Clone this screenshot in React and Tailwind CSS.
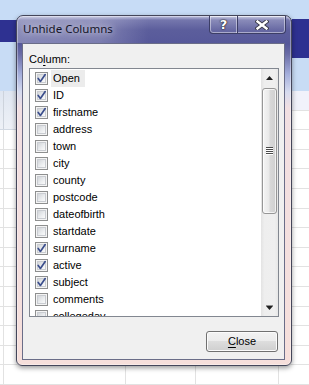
import React from "react";

const items = [
  ["Open", true],
  ["ID", true],
  ["firstname", true],
  ["address", false],
  ["town", false],
  ["city", false],
  ["county", false],
  ["postcode", false],
  ["dateofbirth", false],
  ["startdate", false],
  ["surname", true],
  ["active", true],
  ["subject", true],
  ["comments", false],
  ["collegeday", false],
];

function GridRows({ count, cells }) {
  return (
    <>
      {Array.from({ length: count }).map((_, i) => (
        <div key={i} className="h-[20px] flex border-b border-[#e2e2e2] bg-white">
          {cells}
        </div>
      ))}
    </>
  );
}

function CheckBox({ checked }) {
  return (
    <span className="relative w-[13px] h-[13px] shrink-0 border border-[#8e8f8f] bg-[#f4f4f4] p-[1px]">
      <span className="block w-full h-full border border-[#c9ccd1] bg-[linear-gradient(135deg,#d2d5d9,#eceef0_60%,#fafafa)]" />
      {checked && (
        <svg className="absolute left-[-1px] top-[-1px]" width="13" height="13" viewBox="0 0 13 13">
          <path d="M3.2 6.4 L5.4 9.4 L10.2 2.6" fill="none" stroke="#3b4e8c" strokeWidth="1.7" strokeLinecap="round" strokeLinejoin="round" />
        </svg>
      )}
    </span>
  );
}

export default function App() {
  return (
    <div className="relative w-[309px] h-[385px] overflow-hidden bg-white font-['Liberation_Sans',Arial,sans-serif]">
      {/* background sheet */}
      <div className="flex w-full h-full">
        <div className="w-[16px] flex flex-col">
          <div className="h-[20px] bg-[#c7dcf6]" />
          <div className="h-[23px] bg-[#2e3191]" />
          <div className="h-[50px] bg-[#c8dcf5]" />
          <div className="h-[40px] flex border-b border-[#d2d9e3] bg-[linear-gradient(to_bottom,#dfe6f1,#eef1f7)]">
            <div className="w-[4px] border-r border-[#cdd3dc]" />
          </div>
          <GridRows count={13} cells={<div className="w-[4px] border-r border-[#e2e2e2]" />} />
        </div>
        <div className="flex-1 flex flex-col">
          <div className="h-[20px] bg-[#c7dcf6]" />
          <div className="h-[30px] bg-[#2e3191]" />
          <div className="h-[43px] bg-[#c8dcf5]" />
          <div className="h-[40px] bg-[#eef1f7] border-b border-[#d2d9e3]" />
          <GridRows
            count={13}
            cells={
              <>
                <div className="w-[110px] border-r border-[#e2e2e2]" />
                <div className="w-[70px] border-r border-[#e2e2e2]" />
                <div className="w-[83px] border-r border-[#e2e2e2]" />
              </>
            }
          />
        </div>
        <div className="w-[17px] flex flex-col">
          <div className="h-[19px] bg-[#c7dcf6]" />
          <div className="h-[40px] bg-[#2e3191]" />
          <div className="h-[34px] bg-[#c8dcf5]" />
          <div className="h-[20px] bg-[#f1f2fb] border-b border-[#e2e2e2]" />
          <GridRows count={14} cells={null} />
        </div>
      </div>

      {/* dialog window */}
      <div className="absolute left-[16px] top-[15px] w-[276px] h-[351px] flex flex-col rounded-t-[7px] rounded-b-[6px] border border-[#44465a] bg-[linear-gradient(to_bottom,#c2c5e0_0px,#7577ad_4px,#5c5e9c_14px,#56589a_28px,#6a6ca6_38px,#a4aedb_58px,#d6dbef_76px,#f1dfe2_92px,#f6dfdb_100%)] shadow-[0_2px_5px_rgba(0,0,0,0.4),inset_0_0_0_1px_rgba(255,255,255,0.35)]">
        <div className="h-[27px] flex items-start pl-[6px] pr-[5px] rounded-t-[6px] bg-[linear-gradient(to_right,rgba(255,255,255,0.28),rgba(255,255,255,0.22)_30%,rgba(255,255,255,0)_48%)]">
          <span className="mt-[5px] text-[11.5px] leading-[16px] text-[#15152a] font-['Noto_Sans','Liberation_Sans',sans-serif] [text-shadow:0_0_6px_rgba(255,255,255,0.8),0_0_12px_rgba(255,255,255,0.5)]">
            Unhide Columns
          </span>
          <div className="ml-auto flex h-[18px] rounded-b-[4px] border border-t-0 border-[#3c3e66] shadow-[inset_0_0_0_1px_rgba(255,255,255,0.45)] overflow-hidden">
            <div className="w-[28px] h-full flex items-center justify-center border-r border-[#3c3e66] shadow-[inset_-1px_0_0_rgba(255,255,255,0.45)] bg-[linear-gradient(to_bottom,rgba(255,255,255,0.18),rgba(255,255,255,0.05))]">
              <span className="text-[13px] leading-none font-bold text-white font-['DejaVu_Sans','Liberation_Sans',sans-serif] [text-shadow:0_0_1px_#222,0_0_1px_#222,0_0_2px_#333]">
                ?
              </span>
            </div>
            <div className="w-[47px] h-full flex items-center justify-center bg-[linear-gradient(to_bottom,rgba(255,255,255,0.18),rgba(255,255,255,0.05))]">
              <svg width="14" height="10" viewBox="0 0 14 10">
                <path d="M2.5 1.5 L11.5 8.5 M11.5 1.5 L2.5 8.5" stroke="#3a3a48" strokeWidth="4.2" strokeLinecap="square" />
                <path d="M2.5 1.5 L11.5 8.5 M11.5 1.5 L2.5 8.5" stroke="#ffffff" strokeWidth="2.4" strokeLinecap="square" />
              </svg>
            </div>
          </div>
        </div>

        {/* client area */}
        <div className="ml-[5px] mr-[6px] h-[317px] flex flex-col border border-[#6a6d88] bg-[#f0f0f0] text-[11px] text-black">
          <div className="ml-[6px] mt-[7px] h-[16px] leading-[16px]">
            Co<span className="underline underline-offset-2">l</span>umn:
          </div>
          <div className="ml-[6px] mt-[1px] w-[250px] h-[249px] flex border border-[#828790] bg-white">
            <div className="flex-1 overflow-hidden pt-[1px]">
              {items.map(([name, checked], i) => (
                <div key={name} className="h-[17px] flex items-center pl-[5px]">
                  <CheckBox checked={checked} />
                  <span
                    className={
                      i === 0
                        ? "ml-[3px] pl-[2px] pr-[5px] h-[17px] leading-[17px] bg-[#ececec]"
                        : "ml-[3px] pl-[2px] h-[17px] leading-[17px]"
                    }
                  >
                    {name}
                  </span>
                </div>
              ))}
            </div>
            <div className="w-[17px] h-full flex flex-col bg-[linear-gradient(to_right,#e3e3e3,#eeeeee_20%,#efefef_80%,#e7e7e7)]">
              <div className="h-[18px] flex items-center justify-center">
                <svg width="7" height="4" viewBox="0 0 7 4">
                  <path d="M0 4 L3.5 0 L7 4 Z" fill="#202020" />
                </svg>
              </div>
              <div className="mx-[1px] mt-[1px] h-[126px] flex items-center justify-center rounded-[3px] border border-[#969696] bg-[linear-gradient(to_right,#f4f4f4,#e9e9e9_45%,#d8d8d8_55%,#d0d0d0)] shadow-[inset_0_0_0_1px_rgba(255,255,255,0.7)]">
                <svg width="7" height="8" viewBox="0 0 7 8">
                  <path d="M0 0.5 H7 M0 2.5 H7 M0 4.5 H7 M0 6.5 H7" stroke="#4a4a4a" strokeWidth="1" />
                  <path d="M0 1.5 H7 M0 3.5 H7 M0 5.5 H7 M0 7.5 H7" stroke="#ffffff" strokeWidth="1" />
                </svg>
              </div>
              <div className="flex-1" />
              <div className="h-[18px] flex items-center justify-center">
                <svg width="7" height="5" viewBox="0 0 7 5">
                  <path d="M0 0.5 H7" stroke="#909090" strokeWidth="1" />
                  <path d="M0 1 L3.5 5 L7 1 Z" fill="#202020" />
                </svg>
              </div>
            </div>
          </div>
          <div className="mt-[14px] mr-[6px] self-end">
            <button className="w-[72px] h-[21px] rounded-[3px] border border-[#707070] bg-[linear-gradient(to_bottom,#f2f2f2,#ebebeb_50%,#dddddd_50%,#cfcfcf)] shadow-[inset_0_0_0_1px_#fbfbfb] text-[11px] leading-[19px] text-black">
              <span className="underline underline-offset-2">C</span>lose
            </button>
          </div>
        </div>
      </div>
    </div>
  );
}
